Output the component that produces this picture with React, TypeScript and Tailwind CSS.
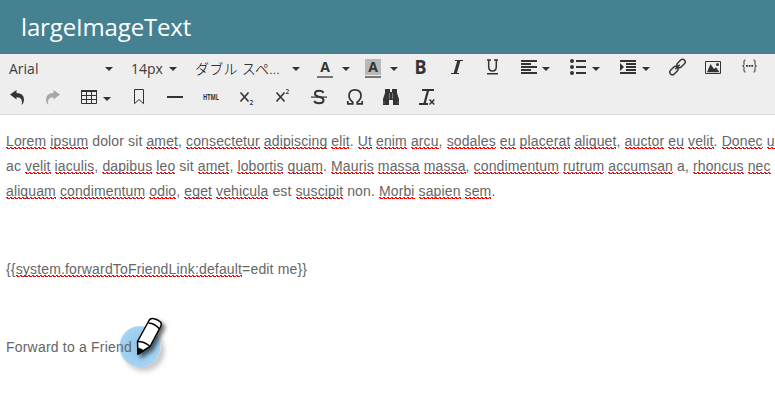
import type { ReactNode } from "react";

const INK = "#333333";

type IconProps = { w: number; label: string; className?: string; children: ReactNode };

function Icon({ w, label, className = "", children }: IconProps) {
  return (
    <svg
      width={w}
      height={20}
      viewBox={`0 0 ${w} 20`}
      role="img"
      aria-label={label}
      className={`shrink-0 overflow-visible ${className}`}
      fill={INK}
      fontFamily="'Open Sans', sans-serif"
    >
      {children}
    </svg>
  );
}

function Caret({ className = "" }: { className?: string }) {
  return (
    <Icon w={8} label="open" className={className}>
      <path d="M0 9h8L4 13z" />
    </Icon>
  );
}

function Toolbar() {
  return (
    <div className="h-[61px] border-b border-[#dadada] bg-[#eeeeee] text-[14px] leading-5 text-[#3c3c3c]">
      <div className="flex h-[29px] items-start pt-1 pl-[9px]">
        <span className="w-24 shrink-0 pt-px">Arial</span>
        <Caret />
        <span className="ml-[18px] w-[38px] shrink-0 pt-px">14px</span>
        <Caret />
        <span className="ml-[18px] w-[97px] shrink-0 whitespace-nowrap pt-px font-light tracking-[0.25px] text-black">ダブル スペ...</span>
        <Caret />
        <Icon w={16} label="Text color" className="ml-[17px]">
          <text x="8" y="14" fontSize="14" fontWeight="700" textAnchor="middle">A</text>
          <path d="M0 18h16v2H0z" fill="#777" />
        </Icon>
        <Caret className="ml-[9px]" />
        <Icon w={16} label="Background color" className="ml-[15px]">
          <path d="M0 1h16v16H0z" fill="#b8b8b8" />
          <text x="8" y="14" fontSize="14" fontWeight="700" textAnchor="middle">A</text>
          <path d="M0 18h16v2H0z" fill="#777" />
        </Icon>
        <Caret className="ml-[9px]" />
        <Icon w={12} label="Bold" className="ml-[17px]">
          <text x="-0.5" y="16" fontSize="19" fontWeight="700" textLength="12" lengthAdjust="spacingAndGlyphs">B</text>
        </Icon>
        <Icon w={12} label="Italic" className="ml-6">
          <path d="M4 2h8v1H4zM0 15h8v1H0zM6.5 2h3.2L5.6 16H2.4z" />
        </Icon>
        <Icon w={12} label="Underline" className="ml-6">
          <path d="M0 2h4M7 2h4M1.7 2v6.5Q1.7 13 5.5 13T9.3 8.5V2" fill="none" stroke={INK} strokeWidth="1.5" />
          <path d="M0 15h11v1.5H0z" />
        </Icon>
        <Icon w={17} label="Align left" className="ml-[22px]">
          <path d="M0 2h16v2H0zM0 5h10v2H0zM0 8h16v2H0zM0 11h10v2H0zM0 14h16v2H0z" />
        </Icon>
        <Caret className="ml-[4px]" />
        <Icon w={17} label="Bullet list" className="ml-5">
          <circle cx="2" cy="3" r="2" /><circle cx="2" cy="9" r="2" /><circle cx="2" cy="15" r="2" />
          <path d="M6 2h10v2H6zM6 8h10v2H6zM6 14h10v2H6z" />
        </Icon>
        <Caret className="ml-[5px]" />
        <Icon w={17} label="Indent" className="ml-5">
          <path d="M0 2h16v2H0zM6 5h10v2H6zM6 8h10v2H6zM6 11h10v2H6zM0 14h16v2H0zM0 5l4 4-4 4z" />
        </Icon>
        <Caret className="ml-[5px]" />
        <Icon w={17} label="Link" className="ml-[19px]">
          <g fill="none" stroke={INK} strokeWidth="1.4" transform="rotate(-45 8.5 9)">
            <rect x="-1.3" y="6.4" width="9.500" height="5.2" rx="2.6" />
            <rect x="8.8" y="6.4" width="9.500" height="5.2" rx="2.6" />
            <path d="M5.3 9h6.4" />
          </g>
        </Icon>
        <Icon w={17} label="Image" className="ml-[19px]">
          <path d="M.5 3.500h15v12H.5z" fill="none" stroke={INK} />
          <path d="M2 14.300 5.500 6 9 11l2-1.800 3.500 5.100z" />
          <circle cx="12.500" cy="6.500" r="1.500" />
        </Icon>
        <Icon w={16} label="Token" className="ml-5 -translate-y-px">
          <path d="M3.5 3H3Q2 3 2 4v3.5Q2 9 .5 9 2 9 2 10.500V14q0 1 1 1h.5M11.500 3h.5q1 0 1 1v3.500Q13 9 14.500 9 13 9 13 10.500V14q0 1-1 1h-.5" fill="none" stroke={INK} />
          <path d="M4 8h1.800v1.800H4zM6.700 8h1.800v1.800H6.700zM9.300 8h1.800v1.800H9.300z" />
        </Icon>
      </div>

      <div className="flex h-[31px] items-start pt-1 pl-[10px]">
        <Icon w={14} label="Undo">
          <path d="M0 7.500 6.500 3v3Q14 6 14 13q0 3-2.500 5Q13.500 10 6.500 10.300V12.500z" />
        </Icon>
        <Icon w={14} label="Redo" className="ml-[22px]">
          <path d="M14 7.500 7.500 3v3Q0 6 0 13q0 3 2.500 5Q.5 10 7.500 10.300V12.500z" fill="#a6a6a6" />
        </Icon>
        <Icon w={16} label="Table" className="ml-[21px]">
          <path d="M0 3h16v2H0z" />
          <path d="M.5 3v13.500h15V3M0 8.500h16M0 12.500h16M5.500 4v12M10.500 4v12" fill="none" stroke={INK} />
        </Icon>
        <Caret className="ml-1.5 translate-y-px" />
        <Icon w={11} label="Bookmark" className="ml-[22px]">
          <path d="M1.500 2.500h9v14.200L6 12.500l-4.500 4.200z" fill="none" stroke={INK} />
        </Icon>
        <Icon w={16} label="Horizontal rule" className="ml-[23px]">
          <path d="M0 9h16v2H0z" />
        </Icon>
        <Icon w={16} label="HTML" className="ml-5">
          <text x="0" y="13" fontSize="8.500" fontWeight="700" textLength="16" lengthAdjust="spacingAndGlyphs">HTML</text>
        </Icon>
        <Icon w={15} label="Subscript" className="ml-[21px]">
          <path d="M.5 5.500l8 9M8.500 5.500l-8 9" stroke={INK} strokeWidth="1.600" />
          <text x="9.500" y="18" fontSize="6.500" fontWeight="600">2</text>
        </Icon>
        <Icon w={15} label="Superscript" className="ml-[21px]">
          <path d="M.5 5.500l8 9M8.500 5.500l-8 9" stroke={INK} strokeWidth="1.600" />
          <text x="9.500" y="7" fontSize="6.500" fontWeight="600">2</text>
        </Icon>
        <Icon w={16} label="Strikethrough" className="ml-5">
          <path d="M12.500 5.800Q11.500 3.800 8 3.800 4 3.800 4 6.700 4 9 8 9.700q4.500.8 4.500 3.600 0 2.900-4.500 2.900-3.800 0-4.800-2.200" fill="none" stroke={INK} strokeWidth="2" />
          <path d="M0 9.500h16v1.200H0z" />
        </Icon>
        <Icon w={17} label="Special character" className="ml-5">
          <path d="M.8 14v2.800h5v-1.500Q2 12.500 2 8.800 2 2.800 8 2.800t6 6q0 3.700-3.800 6.500v1.500h5V14" fill="none" stroke={INK} strokeWidth="1.700" />
        </Icon>
        <Icon w={16} label="Find" className="ml-[19px]">
          <path d="M2 2h5v3h2V2h5v4l2 6v6h-6v-5H6v5H0v-6l2-6z" />
          <path d="M6.500 6v6M9.500 6v6M1 14.500v2M15 14.500v2" stroke="#999" strokeWidth=".7" />
        </Icon>
        <Icon w={17} label="Clear formatting" className="ml-5">
          <path d="M3 2h12v2H3zM0 16h9v2H0zM8 3h2.300L6.800 16H4.500z" />
          <path d="M10.500 12.500l4.800 5M15.300 12.500l-4.800 5" stroke={INK} strokeWidth="1.500" />
        </Icon>
      </div>
    </div>
  );
}

/* Words wrapped in underscores carry the spell-checker's red zigzag. */
const LINES = [
  "_Lorem_ _ipsum_ dolor sit _amet_, _consectetur_ _adipiscing_ _elit_. _Ut_ _enim_ _arcu_, _sodales_ _eu_ _placerat_ _aliquet_, _auctor_ _eu_ _velit_. _Donec_ _u_",
  "ac _velit_ _iaculis_, _dapibus_ _leo_ sit _amet_, _lobortis_ _quam_. _Mauris_ _massa_ _massa_, _condimentum_ _rutrum_ _accumsan_ a, _rhoncus_ _nec_",
  "_aliquam_ _condimentum_ _odio_, _eget_ _vehicula_ est _suscipit_ non. _Morbi_ _sapien_ _sem_.",
];

function Checked({ text }: { text: string }) {
  return (
    <>
      {text.split("_").map((part, i) =>
        i % 2 ? (
          <span key={i} className="relative">
            {part}
            <svg className="absolute top-[14px] left-0 h-[3px] w-full" aria-hidden="true" shapeRendering="crispEdges">
              <rect width="100%" height="3" fill="url(#zigzag)" />
            </svg>
          </span>
        ) : (
          part
        )
      )}
    </>
  );
}

function Pencil() {
  return (
    <svg width="70" height="70" viewBox="0 0 70 70" className="absolute top-[-25px] left-[108px]" aria-hidden="true">
      <defs>
        <filter id="soft" x="-50%" y="-50%" width="200%" height="200%">
          <feDropShadow dx="4" dy="4" stdDeviation="2.5" floodColor="#000" floodOpacity="0.22" />
        </filter>
        <filter id="pen" x="-50%" y="-50%" width="200%" height="200%">
          <feDropShadow dx="3" dy="3" stdDeviation="2" floodColor="#000" floodOpacity="0.6" />
        </filter>
        <radialGradient id="spot">
          <stop offset="0" stopColor="#8ac4eb" />
          <stop offset="1" stopColor="#a8d4f1" />
        </radialGradient>
      </defs>
      <circle cx="26" cy="36.500" r="20.500" fill="url(#spot)" filter="url(#soft)" />
      <g filter="url(#pen)" stroke="#050505" strokeWidth="1.500" strokeLinejoin="round">
        <path d="M23.500 31.500 35 10.500q1.500-2.500 4-2 4.500.7 7.500 3.500 1.500 2 .4 4L36 36.500l-12 7.500z" fill="#fff" />
        <path d="M34.500 13q6.500 .5 11 6" fill="none" />
        <path d="M23.500 31.500q7.500 0 12.500 5" fill="none" />
        <path d="M24 38.500V44l5-3.200q-2-2-5-2.300z" fill="#050505" />
      </g>
    </svg>
  );
}

export default function App() {
  return (
    <div className="h-[400px] w-[775px] overflow-hidden bg-white font-['Open_Sans','Noto_Sans_CJK_JP',sans-serif]">
      <svg className="absolute size-0" aria-hidden="true">
        <pattern id="zigzag" width="4" height="3" patternUnits="userSpaceOnUse">
          <path d="M0 0h2v1H0zM1 1h1v1H1zM2 1h2v1H2z" fill="#f00" shapeRendering="crispEdges" />
        </pattern>
      </svg>
      <header className="flex h-[54px] items-center bg-[#468192] pl-[21px] text-[24px] tracking-[-0.15px] text-white">
        <h1>largeImageText</h1>
      </header>
      <Toolbar />
      <main className="pt-[14px] pl-[6px] font-['Liberation_Sans',Arial,sans-serif] text-[14px] leading-[25px] tracking-[0.122px] text-[#666]">
        <div className="h-[75px]">
          {LINES.map((line) => (
            <p key={line} className="whitespace-nowrap">
              <Checked text={line} />
            </p>
          ))}
        </div>
        <p className="mt-[53px] tracking-[0.16px]"><Checked text="{{_system.forwardToFriendLink:default_=edit me}}" /></p>
        <div className="relative mt-[53px]">
          <Pencil />
          <p className="relative tracking-[0.2px]">Forward to a Friend</p>
        </div>
      </main>
    </div>
  );
}
